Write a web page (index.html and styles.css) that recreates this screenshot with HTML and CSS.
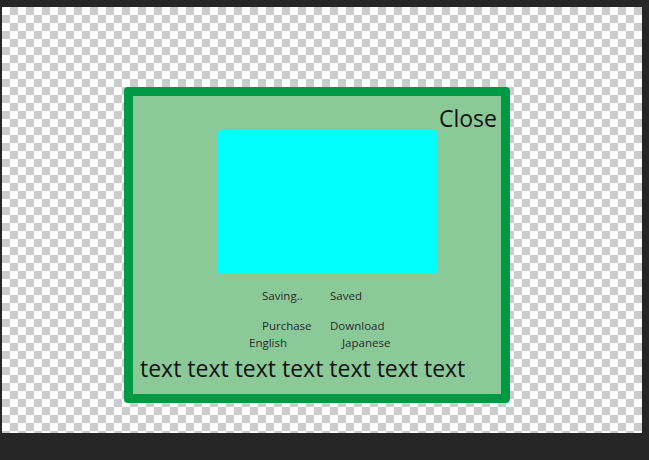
FILE: index.html
```html
<!DOCTYPE html>
<html>
<head>
<meta charset="utf-8">
<link rel="stylesheet" href="styles.css">
</head>
<body>
<div class="frame">
  <div class="stage">
    <div class="dialog">
      <span class="close">Close</span>
      <div class="media"></div>
      <div class="row row-status"><span>Saving..</span><span>Saved</span></div>
      <div class="row row-actions"><span>Purchase</span><span>Download</span></div>
      <div class="row row-lang"><span>English</span><span>Japanese</span></div>
      <p class="body-text">text text text text text text text</p>
    </div>
  </div>
</div>
</body>
</html>
```
FILE: styles.css
```css
html, body {
  margin: 0;
  padding: 0;
  background: #262626;
}
.frame {
  width: 649px;
  height: 460px;
  box-sizing: border-box;
  padding: 7px 7px 27px 2px;
}
.stage {
  width: 640px;
  height: 426px;
  box-sizing: border-box;
  padding: 80px 0 0 122px;
  background: repeating-conic-gradient(#cccccc 0 25%, #ffffff 0 50%) 0 0 / 16px 16px;
}
.dialog {
  position: relative;
  width: 386px;
  height: 316px;
  box-sizing: border-box;
  border: 9px solid #009a44;
  border-radius: 4px;
  background: #8cc999;
  font-family: "Open Sans", "Noto Sans", sans-serif;
  display: flex;
  flex-direction: column;
}
.close {
  position: absolute;
  top: 11px;
  right: 4px;
  font-size: 23px;
  line-height: 1;
  color: #111;
}
.media {
  margin: 34px 0 0 85px;
  width: 219px;
  height: 144px;
  border-radius: 3px;
  background: #00ffff;
}
.row {
  display: grid;
  font-size: 11.5px;
  line-height: 1;
  color: #2a2a2a;
}
.row-status {
  margin-top: 16px;
  padding-left: 129px;
  grid-template-columns: 68px auto;
}
.row-actions {
  margin-top: 18px;
  padding-left: 129px;
  grid-template-columns: 68px auto;
}
.row-lang {
  margin-top: 6px;
  padding-left: 116px;
  grid-template-columns: 93px auto;
}
.body-text {
  margin: 8px 0 0 7px;
  font-size: 23px;
  line-height: 1;
  color: #111;
  white-space: nowrap;
}
```
